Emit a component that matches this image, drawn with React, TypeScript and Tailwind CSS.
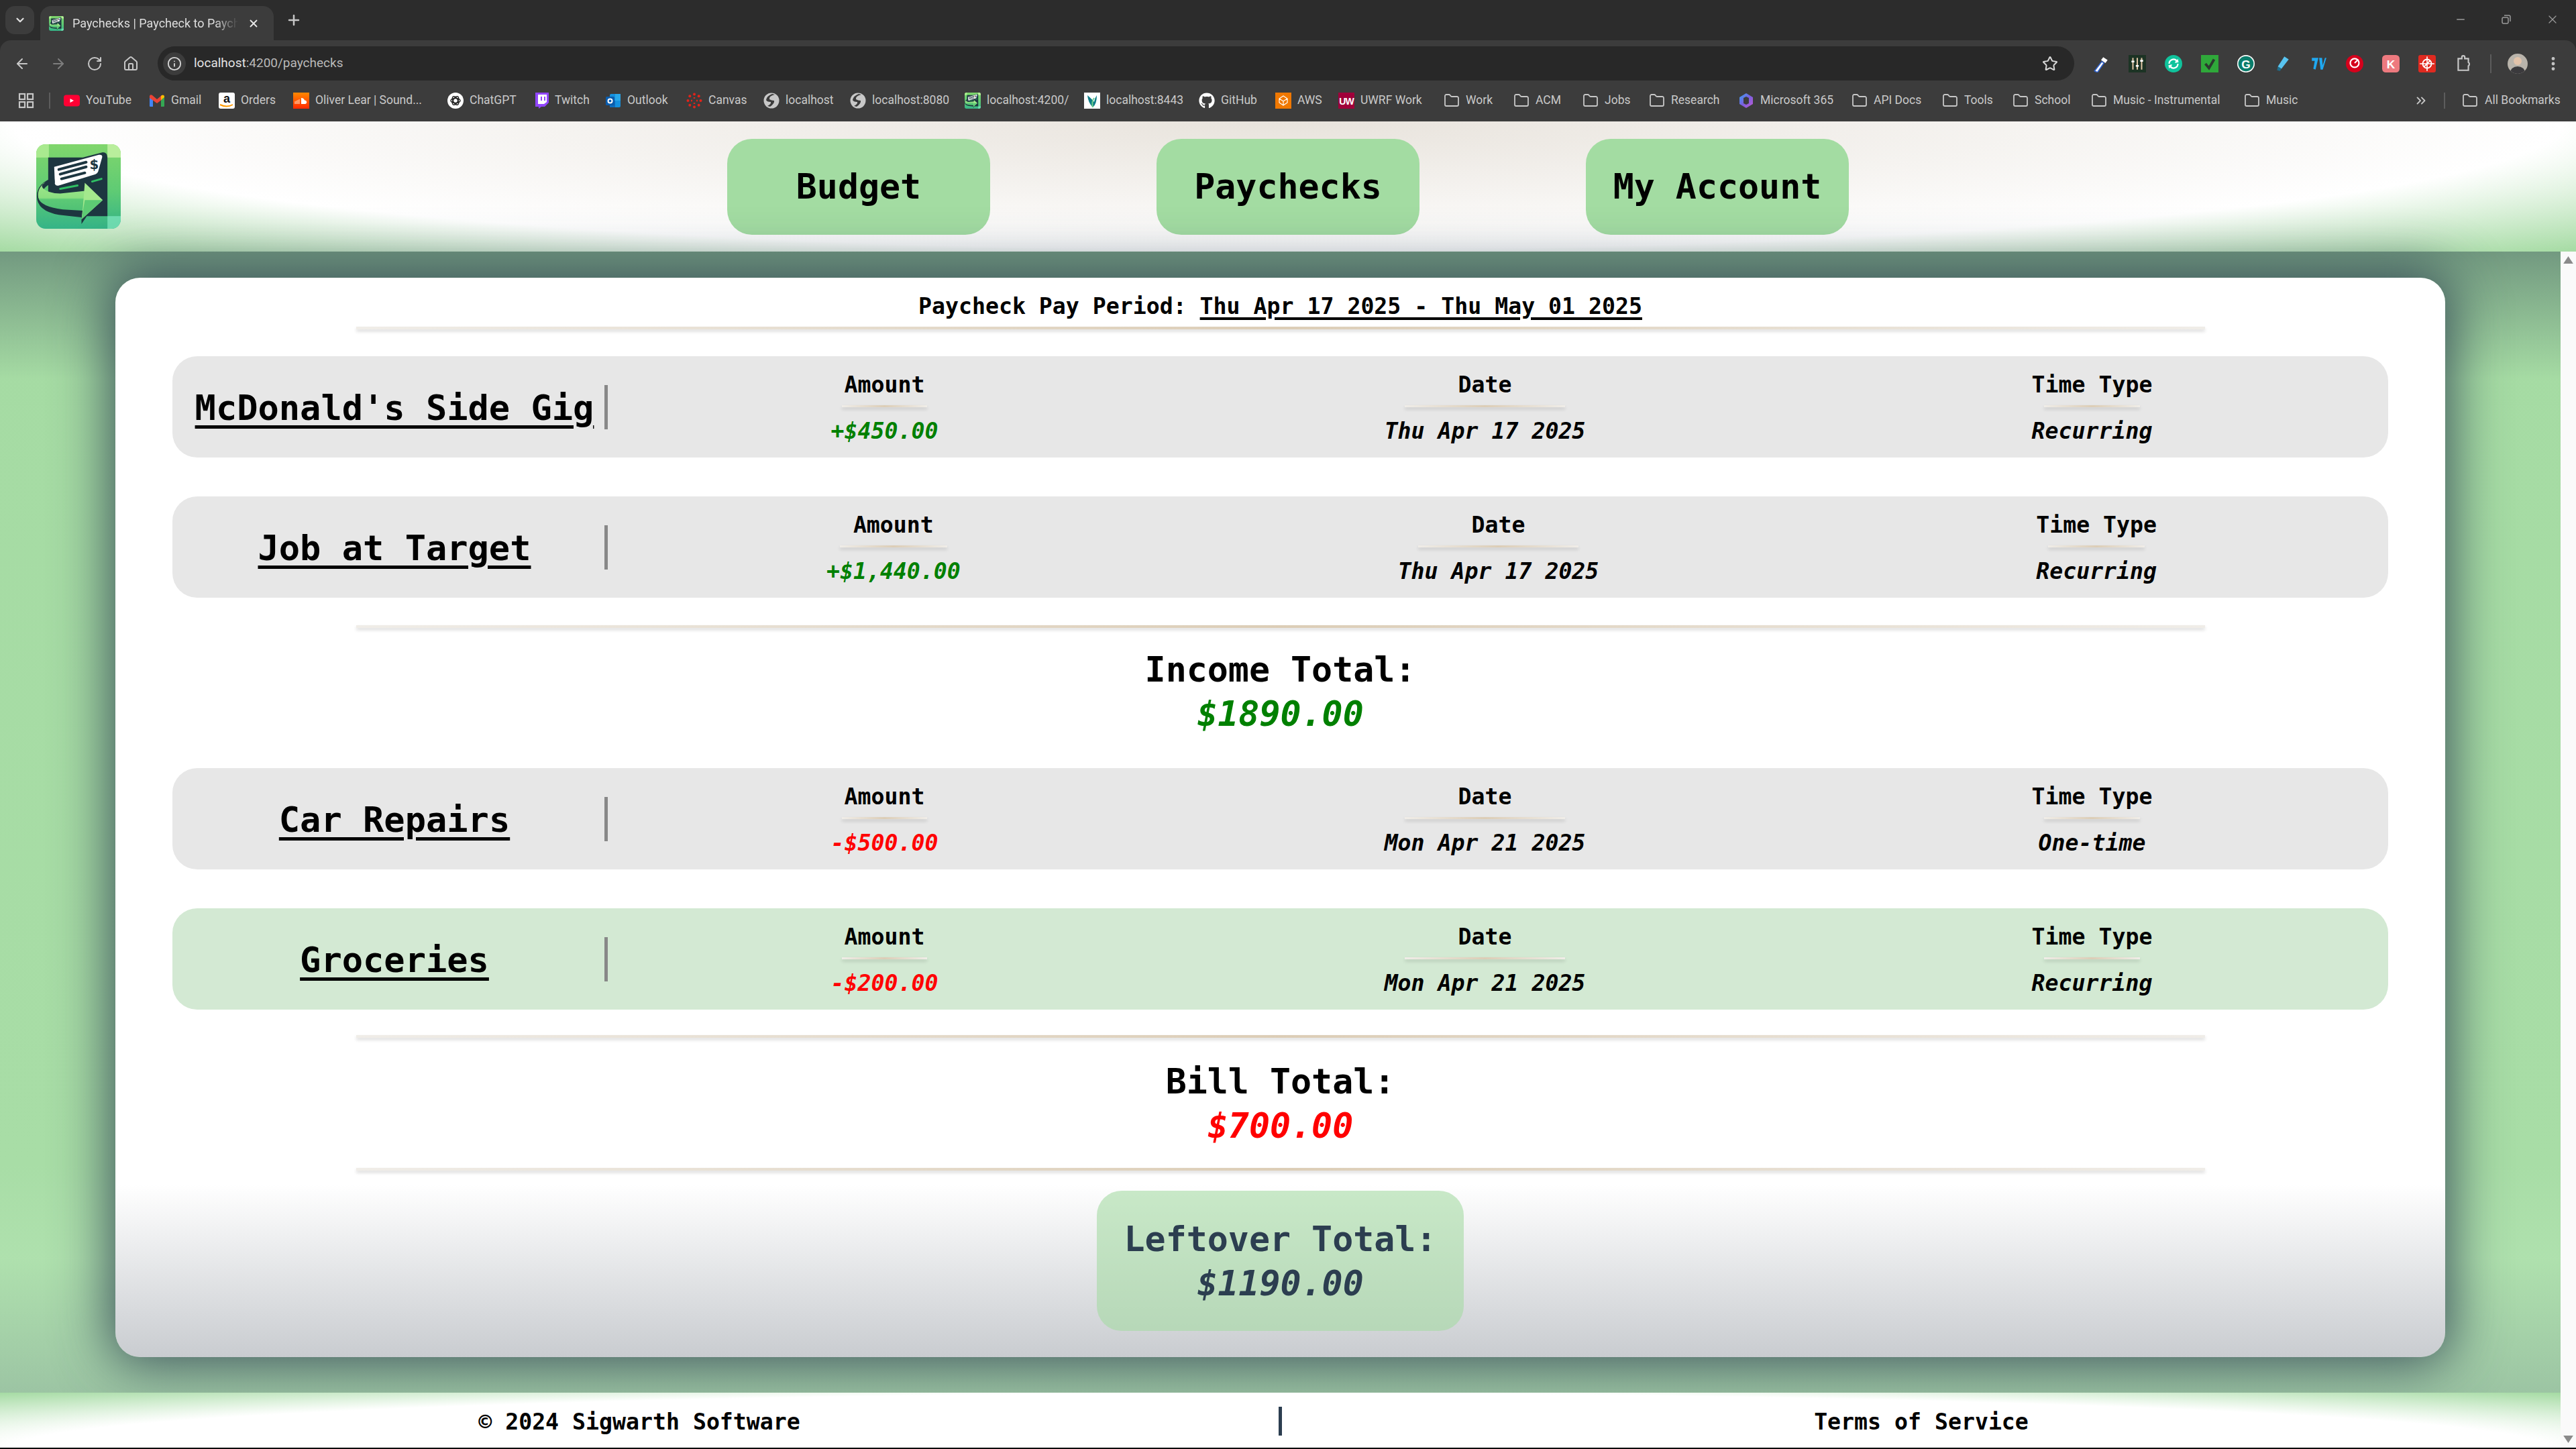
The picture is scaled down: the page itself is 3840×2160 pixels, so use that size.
import { ArrowLeft, ArrowRight, ChevronDown, ChevronsRight, EllipsisVertical, Folder, House, Info, Minus, Plus, RotateCw, Star, X } from "lucide-react";
import { FaGithub } from "react-icons/fa";
import type { ReactNode } from "react";

const mono = "font-['DejaVu_Sans_Mono',monospace]";

function AppLogo({ className }: { className: string }) {
    return (
        <svg viewBox="0 0 127 127" className={className}>
            <defs>
                <linearGradient id="logoBg" x1="0" y1="0" x2="0" y2="1">
                    <stop offset="0" stopColor="#80d66c" />
                    <stop offset="0.55" stopColor="#5fcb74" />
                    <stop offset="1" stopColor="#35b487" />
                </linearGradient>
                <linearGradient id="logoBand" x1="0" y1="0" x2="0" y2="1">
                    <stop offset="0" stopColor="#a2e78c" />
                    <stop offset="0.55" stopColor="#8bdf80" />
                    <stop offset="0.6" stopColor="#5cc976" />
                    <stop offset="1" stopColor="#4fc175" />
                </linearGradient>
                <clipPath id="logoClip">
                    <rect width="127" height="127" rx="14" />
                </clipPath>
            </defs>
            <g clipPath="url(#logoClip)">
                <rect width="127" height="127" fill="url(#logoBg)" />
                <rect width="19" height="20" fill="#a9ea8f" />
                <rect x="107" width="20" height="20" fill="#b9ee9c" />
                <rect x="107" y="108" width="20" height="19" fill="#6edcb0" />
                <path d="M18 20H70L100 12Q107 12 107 20V108H76L68 120V104L40 100 18 80Z" fill="#1d3640" />
                <path d="M27 34 94 16q6-1 5 4L93 41q-1 3-4 4L34 62q-5 1-6-3z" fill="#fff" />
                <path d="M34 38 75 27M36 45 75 34M38 52 73 43" stroke="#1d3640" strokeWidth="4" strokeLinecap="round" />
                <text x="87" y="37" textAnchor="middle" fontFamily="'DejaVu Sans',sans-serif" fontWeight="700" fontSize="20" fill="#1d3640">$</text>
                <path d="M36 67 62 62" stroke="#2fbf63" strokeWidth="3" strokeLinecap="round" />
                <path d="M84 56 98 52" stroke="#2fbf63" strokeWidth="3" strokeLinecap="round" />
                <path d="M27 50Q1 58 1 78 1 100 34 106L70 110V98L40 96Q12 92 10 74 10 62 28 58Z" fill="#1d3640" />
                <path d="M14 57Q6 60 10 66 18 74 36 74L74 70V100L40 98Q6 94 3 80 1 66 14 57Z" fill="url(#logoBand)" />
                <path d="M73 58 100 84 68 113 70 96z" fill="#a4e88d" />
                <path d="M73 84h27L68 113z" fill="#5dcb74" />
            </g>
        </svg>
    );
}

// bookmark favicons, small and hand drawn
function Favicon({ kind }: { kind: string }) {
    const c = "w-[24px] h-[24px] shrink-0";
    switch (kind) {
        case "youtube":
            return (
                <svg viewBox="0 0 24 24" className={c}>
                    <rect y="3.500" width="24" height="17" rx="4" fill="#ff0033" />
                    <path d="M9.500 9l5.500 3-5.500 3z" fill="#fff" />
                </svg>
            );
        case "gmail":
            return (
                <svg viewBox="0 0 24 24" className={c}>
                    <path d="M1 5v15q0 1 1 1h4V10z" fill="#4285f4" />
                    <path d="M23 5v15q0 1-1 1h-4V10z" fill="#34a853" />
                    <path d="M1 5q1-3 4-1l7 6 7-6 1 0v6l-8 6-11-8z" fill="#ea4335" />
                    <path d="M18 5q3-3 5 0v2l-5 4z" fill="#fbbc04" />
                </svg>
            );
        case "amazon":
            return (
                <svg viewBox="0 0 24 24" className={c}>
                    <rect width="24" height="24" rx="3" fill="#fff" />
                    <text x="12" y="15" textAnchor="middle" fontSize="18" fontWeight="700" fontFamily="'Liberation Sans',sans-serif" fill="#111">a</text>
                    <path d="M2 18q10 5 19 0" stroke="#f90" strokeWidth="2" fill="none" />
                </svg>
            );
        case "soundcloud":
            return (
                <svg viewBox="0 0 24 24" className={c}>
                    <defs>
                        <linearGradient id="sc" x1="0" y1="0" x2="0" y2="1">
                            <stop offset="0" stopColor="#ff8800" />
                            <stop offset="1" stopColor="#ff2a00" />
                        </linearGradient>
                    </defs>
                    <rect width="24" height="24" fill="url(#sc)" />
                    <path d="M12 8a5 5 0 0 1 5 3.500 2.800 2.800 0 0 1 1 5.500h-6z" fill="#fff" />
                    <path d="M3 13v4M5 12v5M7 11v6M9 10v7" stroke="#ffc9a8" strokeWidth="1.200" />
                </svg>
            );
        case "chatgpt":
            return (
                <svg viewBox="0 0 24 24" className={c}>
                    <circle cx="12" cy="12" r="12" fill="#fff" />
                    <g fill="none" stroke="#222" strokeWidth="1.500">
                        <ellipse cx="12" cy="12" rx="7" ry="3.500" />
                        <ellipse cx="12" cy="12" rx="7" ry="3.500" transform="rotate(60 12 12)" />
                        <ellipse cx="12" cy="12" rx="7" ry="3.500" transform="rotate(120 12 12)" />
                    </g>
                </svg>
            );
        case "twitch":
            return (
                <svg viewBox="0 0 24 24" className={c}>
                    <path d="M4 0h20v15l-6 6h-5l-4 3v-3H4z" fill="#9146ff" />
                    <path d="M8 3h13v11l-4 3H8z" fill="#fff" />
                    <path d="M12 6h2v6h-2zM17 6h2v6h-2z" fill="#9146ff" />
                </svg>
            );
        case "outlook":
            return (
                <svg viewBox="0 0 24 24" className={c}>
                    <rect x="7" y="2" width="16" height="20" rx="2" fill="#1490df" />
                    <rect x="15" y="2" width="8" height="10" fill="#28a8ea" />
                    <rect x="7" y="12" width="8" height="10" fill="#0f6cbd" />
                    <rect x="1" y="6" width="13" height="13" rx="1.500" fill="#0a5cad" />
                    <circle cx="7.500" cy="12.500" r="3" fill="none" stroke="#fff" strokeWidth="2" />
                </svg>
            );
        case "canvas":
            return (
                <svg viewBox="0 0 24 24" className={c}>
                    <g fill="#e2231a">
                        <circle cx="12" cy="2.500" r="2" />
                        <circle cx="12" cy="21.500" r="2" />
                        <circle cx="2.500" cy="12" r="2" />
                        <circle cx="21.500" cy="12" r="2" />
                        <circle cx="5.300" cy="5.300" r="2" />
                        <circle cx="18.700" cy="5.300" r="2" />
                        <circle cx="5.300" cy="18.700" r="2" />
                        <circle cx="18.700" cy="18.700" r="2" />
                    </g>
                    <g stroke="#e2231a" strokeWidth="2.500">
                        <path d="M12 7v2M12 15v2M7 12h2M15 12h2" />
                    </g>
                </svg>
            );
        case "globe":
            return (
                <svg viewBox="0 0 24 24" className={c}>
                    <circle cx="12" cy="12" r="11.500" fill="#c8c8c8" />
                    <path d="M17 3q-9 2-8 7 3 2 7 2 1 4-6 9l-4-1q6-3 5-6-6 0-7-3 1-6 9-9z" fill="#3c3c3c" />
                </svg>
            );
        case "paycheck":
            return <AppLogo className={c} />;
        case "leaf":
            return (
                <svg viewBox="0 0 24 24" className={c}>
                    <rect width="24" height="24" fill="#fff" />
                    <path d="M5 4q1 11 8 18 6-5 6-18-3 4-4 10-3-4-10-10z" fill="#0f7d88" />
                    <path d="M13 22q-2-9 2-14" stroke="#6fd08c" strokeWidth="2" fill="none" />
                </svg>
            );
        case "github":
            return <FaGithub className={`${c} text-white`} />;
        case "aws":
            return (
                <svg viewBox="0 0 24 24" className={c}>
                    <rect width="24" height="24" fill="#f07800" />
                    <path d="M12 5l6 4v6l-6 4-6-4V9zM6 9l6 4 6-4M12 13v6" fill="none" stroke="#fff" strokeWidth="1.200" />
                </svg>
            );
        case "uw":
            return (
                <svg viewBox="0 0 24 24" className={c}>
                    <rect width="24" height="24" fill="#a0003a" />
                    <text x="12" y="18" textAnchor="middle" fontSize="14" fontWeight="700" fontFamily="'Liberation Sans',sans-serif" fill="#fff" letterSpacing="-1">UW</text>
                </svg>
            );
        case "m365":
            return (
                <svg viewBox="0 0 24 24" className={c}>
                    <defs>
                        <linearGradient id="m365" x1="0" y1="0" x2="1" y2="1">
                            <stop offset="0" stopColor="#38a3f1" />
                            <stop offset="0.5" stopColor="#7b5fe0" />
                            <stop offset="1" stopColor="#c25bd0" />
                        </linearGradient>
                    </defs>
                    <path d="M12 1 22 7v10L12 23 2 17V7z" fill="url(#m365)" />
                    <path d="M8 8l4-2 4 2v8l-4 2-4-2z" fill="#3c3c3c" />
                </svg>
            );
        default:
            return <Folder className="w-[24px] h-[24px] shrink-0 text-[#c7c7c7]" strokeWidth={1.8} />;
    }
}

const bookmarks = [
    { label: "YouTube", icon: "youtube", box: "w-[127px]" },
    { label: "Gmail", icon: "gmail", box: "w-[104px]" },
    { label: "Orders", icon: "amazon", box: "w-[111px]" },
    { label: "Oliver Lear | Sound...", icon: "soundcloud", box: "w-[230px]" },
    { label: "ChatGPT", icon: "chatgpt", box: "w-[127px]" },
    { label: "Twitch", icon: "twitch", box: "w-[108px]" },
    { label: "Outlook", icon: "outlook", box: "w-[121px]" },
    { label: "Canvas", icon: "canvas", box: "w-[115px]" },
    { label: "localhost", icon: "globe", box: "w-[129px]" },
    { label: "localhost:8080", icon: "globe", box: "w-[171px]" },
    { label: "localhost:4200/", icon: "paycheck", box: "w-[178px]" },
    { label: "localhost:8443", icon: "leaf", box: "w-[171px]" },
    { label: "GitHub", icon: "github", box: "w-[114px]" },
    { label: "AWS", icon: "aws", box: "w-[94px]" },
    { label: "UWRF Work", icon: "uw", box: "w-[157px]" },
    { label: "Work", icon: "folder", box: "w-[104px]" },
    { label: "ACM", icon: "folder", box: "w-[103px]" },
    { label: "Jobs", icon: "folder", box: "w-[99px]" },
    { label: "Research", icon: "folder", box: "w-[133px]" },
    { label: "Microsoft 365", icon: "m365", box: "w-[169px]" },
    { label: "API Docs", icon: "folder", box: "w-[135px]" },
    { label: "Tools", icon: "folder", box: "w-[105px]" },
    { label: "School", icon: "folder", box: "w-[117px]" },
    { label: "Music - Instrumental", icon: "folder", box: "w-[228px]" },
    { label: "Music", icon: "folder", box: "w-[90px]" },
];

function ExtIcon({ children }: { children: ReactNode }) {
    return <svg viewBox="0 0 24 24" className="w-[26px] h-[26px] shrink-0">{children}</svg>;
}

function BrowserChrome() {
    return (
        <div className="shrink-0 h-[181px] bg-[#2c2c2c] text-[#d4d4d4] font-['Roboto',sans-serif]">
            {/* tab strip */}
            <div className="h-[60px] flex items-end pl-[8px]">
                <div className="w-[43px] h-[42px] mb-[9px] rounded-[14px] bg-[#3c3c3c] flex items-center justify-center">
                    <ChevronDown className="size-[18px] text-[#e0e0e0]" strokeWidth={3} />
                </div>
                <div className="ml-[9px] w-[348px] h-[51px] rounded-t-[16px] bg-[#3c3c3c] flex items-center pl-[13px] pr-[14px]">
                    <AppLogo className="w-[22px] h-[24px] shrink-0" />
                    <span className="ml-[13px] w-[247px] whitespace-nowrap text-[18px] text-[#dedede] [mask-image:linear-gradient(to_right,black_86%,transparent)]">Paychecks | Paycheck to Payche</span>
                    <X className="ml-[14px] size-[18px] text-[#e6e6e6]" strokeWidth={2.5} />
                </div>
                <Plus className="ml-[18px] mb-[18px] size-[24px] text-[#c7c7c7]" strokeWidth={2.5} />
                <div className="flex-1 h-full flex items-center justify-end gap-[51px] pr-[25px] pb-[2px]">
                    <Minus className="size-[18px] text-[#9a9a9a]" />
                    <svg viewBox="0 0 16 16" className="size-[16px] text-[#9a9a9a]" fill="none" stroke="currentColor" strokeWidth="1.500">
                        <rect x="2" y="5" width="9" height="9" rx="2" />
                        <path d="M5 2h7a2 2 0 0 1 2 2v7" />
                    </svg>
                    <X className="size-[20px] text-[#9a9a9a]" strokeWidth={1.5} />
                </div>
            </div>
            {/* toolbar */}
            <div className="h-[60px] bg-[#3c3c3c] rounded-t-[16px] flex items-start pl-[21px] pt-[9px]">
                <div className="h-[51px] flex items-center gap-[30px] text-[#c7c7c7]">
                    <ArrowLeft className="size-[24px]" strokeWidth={2} />
                    <ArrowRight className="size-[24px] text-[#7d7d7d]" strokeWidth={2} />
                    <RotateCw className="size-[24px]" strokeWidth={2} />
                    <House className="size-[24px]" strokeWidth={2} />
                </div>
                <div className="ml-[28px] h-[51px] w-[2857px] shrink-0 rounded-full bg-[#282828] flex items-center pl-[8px] pr-[24px]">
                    <div className="size-[34px] rounded-full bg-[#3c3c3c] flex items-center justify-center">
                        <Info className="size-[22px] text-[#d8d8d8]" strokeWidth={2} />
                    </div>
                    <span className="ml-[12px] text-[19px] text-[#e3e3e3]">
                        localhost<span className="text-[#b9b9b9]">:4200/paychecks</span>
                    </span>
                    <Star className="ml-auto size-[24px] text-[#d8d8d8]" strokeWidth={2} />
                </div>
                <div className="h-[51px] ml-[27px] flex items-center gap-[28px]">
                    <ExtIcon>
                        <path d="M3 22 13 9l3 2-9 13z" fill="#fff" stroke="#2f5fc4" strokeWidth="1.500" />
                        <path d="M15 3l6 4-3 4-6-4z" fill="#fff" />
                    </ExtIcon>
                    <ExtIcon>
                        <rect width="24" height="24" fill="#1c3324" />
                        <path d="M6 4v16M12 4v16M18 4v16" stroke="#e6c9a8" strokeWidth="1.800" />
                        <path d="M4 9h4M10 15h4M16 8h4" stroke="#fff" strokeWidth="2.500" />
                    </ExtIcon>
                    <ExtIcon>
                        <circle cx="12" cy="12" r="12" fill="#10c39c" />
                        <path d="M7 12a5 5 0 0 1 8-4l-1 3 5-1-1-5-1 2a7 7 0 0 0-12 5zM17 12a5 5 0 0 1-8 4l1-3-5 1 1 5 1-2a7 7 0 0 0 12-5z" fill="#fff" />
                    </ExtIcon>
                    <ExtIcon>
                        <rect width="24" height="24" fill="#2fa83a" />
                        <path d="M6 12l5 6 7-12" fill="none" stroke="#2b3a2e" strokeWidth="3.500" />
                    </ExtIcon>
                    <ExtIcon>
                        <circle cx="12" cy="12" r="12" fill="#fff" />
                        <circle cx="12" cy="12" r="10.500" fill="#0a7d6c" />
                        <text x="12" y="18" textAnchor="middle" fontSize="16" fontWeight="700" fontFamily="'Liberation Sans',sans-serif" fill="#fff">G</text>
                    </ExtIcon>
                    <ExtIcon>
                        <path d="M15 2 21 6 11 19l-5-3z" fill="#58c4f0" />
                        <path d="M6 16l5 3-2 3-4-1z" fill="#1f6d8c" />
                    </ExtIcon>
                    <ExtIcon>
                        <path d="M3 4h9l-4 16-3-1 2-11H3z" fill="#1fa8f0" />
                        <path d="M13 4h4l1 10 3-10h2l-5 16h-3z" fill="#1fa8f0" />
                    </ExtIcon>
                    <ExtIcon>
                        <circle cx="12" cy="12" r="12" fill="#d5001c" />
                        <circle cx="12" cy="11" r="6" fill="none" stroke="#fff" strokeWidth="2" />
                        <path d="M12 11l5-5" stroke="#fff" strokeWidth="2" />
                    </ExtIcon>
                    <ExtIcon>
                        <rect width="24" height="24" rx="5" fill="#ee7a7f" />
                        <text x="12" y="18" textAnchor="middle" fontSize="16" fontWeight="700" fontFamily="'Liberation Sans',sans-serif" fill="#fff">K</text>
                    </ExtIcon>
                    <ExtIcon>
                        <rect width="24" height="24" rx="3" fill="#e02a20" />
                        <circle cx="12" cy="12" r="6" fill="none" stroke="#fff" strokeWidth="1.800" />
                        <path d="M12 2v20M2 12h20M8 16l8-8" stroke="#fff" strokeWidth="1.500" />
                    </ExtIcon>
                    <ExtIcon>
                        <path d="M5 5h5V3a2 2 0 0 1 4 0v2h5v5a3 3 0 0 1 0 5v6H5z" fill="none" stroke="#c7c7c7" strokeWidth="2" />
                    </ExtIcon>
                </div>
                <div className="h-[51px] ml-[27px] flex items-center">
                    <div className="w-[2px] h-[28px] bg-[#5c5c5c]" />
                    <svg viewBox="0 0 30 30" className="ml-[24px] size-[30px] rounded-full">
                        <rect width="30" height="30" fill="#b9b4ab" />
                        <circle cx="15" cy="11" r="6" fill="#e2c3aa" />
                        <path d="M3 30q2-11 12-11t12 11z" fill="#3b3a3d" />
                    </svg>
                    <EllipsisVertical className="ml-[25px] size-[26px] text-[#c7c7c7]" strokeWidth={2.5} />
                </div>
            </div>
            {/* bookmarks bar */}
            <div className="h-[61px] bg-[#3c3c3c] flex items-center text-[17.5px] text-[#c9c9c9] pl-[27px] pb-[2px]">
                <svg viewBox="0 0 24 24" className="size-[24px] shrink-0" fill="none" stroke="#c7c7c7" strokeWidth="2.200">
                    <rect x="2" y="2" width="8" height="8" />
                    <rect x="14" y="2" width="8" height="8" />
                    <rect x="2" y="14" width="8" height="8" />
                    <rect x="14" y="14" width="8" height="8" />
                </svg>
                <div className="ml-[22px] w-[2px] h-[24px] bg-[#5c5c5c] shrink-0" />
                <div className="ml-[20px] flex items-center">
                    {bookmarks.map((b) => (
                        <div key={b.label} className={`${b.box} shrink-0 flex items-center gap-[9px] whitespace-nowrap`}>
                            <Favicon kind={b.icon} />
                            <span>{b.label}</span>
                        </div>
                    ))}
                </div>
                <ChevronsRight className="ml-[163px] size-[22px] text-[#c7c7c7] shrink-0" />
                <div className="ml-[23px] w-[2px] h-[24px] bg-[#5c5c5c] shrink-0" />
                <div className="ml-[25px] flex items-center gap-[10px] whitespace-nowrap">
                    <Favicon kind="folder" />
                    <span>All Bookmarks</span>
                </div>
            </div>
        </div>
    );
}

function Divider({ className }: { className: string }) {
    return <div className={`${className} bg-[linear-gradient(to_right,#f0ede8,#dccdb6,#f0ede8)] shadow-[0_3px_5px_rgba(0,0,0,0.16)]`} />;
}

interface Entry {
    name: string;
    amount: string;
    positive?: boolean;
    date: string;
    kind: string;
    hover?: boolean;
}

function Cell({ head, value, valueClass }: { head: string; value: string; valueClass: string }) {
    return (
        <div className="flex flex-col items-center">
            <div className="h-[40px] leading-[44px] font-bold text-black">{head}</div>
            <Divider className="w-4/5 h-[3px] mt-[12px]" />
            <div className={`h-[40px] leading-[44px] mt-[14px] font-bold italic whitespace-nowrap ${valueClass}`}>{value}</div>
        </div>
    );
}

function EntryRow({ entry, className }: { entry: Entry; className?: string }) {
    return (
        <div className={`mx-[85px] h-[151px] rounded-[37px] flex items-center pl-[18px] pr-[19px] text-[33.2px] ${entry.hover ? "bg-[#d3e9d3]" : "bg-[#e7e7e7]"} ${className ?? ""}`}>
            <div className="w-[626px] shrink-0 pt-[2px] text-center text-[52px] font-bold text-black underline decoration-[5px] underline-offset-[8px]">{entry.name}</div>
            <div className="w-[5px] h-[66px] shrink-0 bg-[#888888]" />
            <div className="flex-1 flex justify-around">
                <Cell head="Amount" value={entry.amount} valueClass={entry.positive ? "text-[#008000]" : "text-[#ff0000]"} />
                <Cell head="Date" value={entry.date} valueClass="text-black" />
                <Cell head="Time Type" value={entry.kind} valueClass="text-black" />
            </div>
        </div>
    );
}

const income: Entry[] = [
    { name: "McDonald's Side Gig", amount: "+$450.00", positive: true, date: "Thu Apr 17 2025", kind: "Recurring" },
    { name: "Job at Target", amount: "+$1,440.00", positive: true, date: "Thu Apr 17 2025", kind: "Recurring" },
];

const bills: Entry[] = [
    { name: "Car Repairs", amount: "-$500.00", date: "Mon Apr 21 2025", kind: "One-time" },
    { name: "Groceries", amount: "-$200.00", date: "Mon Apr 21 2025", kind: "Recurring", hover: true },
];

export default function App() {
    return (
        <div className={`w-[3840px] h-[2160px] overflow-hidden flex flex-col bg-black ${mono}`}>
            <BrowserChrome />

            {/* site header */}
            <header className="shrink-0 h-[194px] grid grid-cols-[1fr_auto_1fr] items-center bg-[radial-gradient(ellipse_at_top,#e8e3dc_0%,#ffffff_70%,#a5dba3_100%)]">
                <div className="pl-[54px]">
                    <AppLogo className="w-[126px] h-[128px]" />
                </div>
                <nav className="flex gap-[248px] mt-[1px]">
                    {["Budget", "Paychecks", "My Account"].map((item) => (
                        <div key={item} className="w-[392px] h-[143px] rounded-[37px] bg-[#a3dca2] flex items-center justify-center text-[51.6px] font-bold text-black">
                            {item}
                        </div>
                    ))}
                </nav>
                <div />
            </header>

            <div className="h-[1783px] shrink-0 flex">
                <div className="w-[3817px] shrink-0 flex flex-col">
                    <main className="h-[1701px] shrink-0 pt-[39px] px-[172px] bg-[linear-gradient(to_bottom,rgba(44,62,80,0.42),rgba(44,62,80,0)_190px,rgba(44,62,80,0)_1500px,rgba(44,62,80,0.2)),linear-gradient(to_bottom,#a5dba3,#a8dda6_80%,#b8e6b8)]">
                        <div className="h-[1609px] rounded-[37px] shadow-[0_0_80px_10px_rgba(44,62,80,0.85)] bg-[linear-gradient(to_bottom,#ffffff_84%,#c9ccd0)] pt-[21px] flex flex-col">
                            <div className="h-[40px] leading-[43px] text-center text-[33.2px] font-bold text-black whitespace-pre">
                                Paycheck Pay Period: <span className="underline decoration-[4px] underline-offset-[5px]">Thu Apr 17 2025 - Thu May 01 2025</span>
                            </div>
                            <Divider className="mx-auto w-[2756px] h-[4px] mt-[12px]" />

                            <EntryRow entry={income[0]} className="mt-[40px]" />
                            <EntryRow entry={income[1]} className="mt-[58px]" />
                            <Divider className="mx-auto w-[2756px] h-[4px] mt-[41px]" />

                            <div className="mt-[29px] text-center text-[51.6px] leading-[66px] font-bold">
                                <div className="text-black">Income Total:</div>
                                <div className="italic text-[#008000]">$1890.00</div>
                            </div>

                            <EntryRow entry={bills[0]} className="mt-[48px]" />
                            <EntryRow entry={bills[1]} className="mt-[58px]" />
                            <Divider className="mx-auto w-[2756px] h-[4px] mt-[38px]" />

                            <div className="mt-[32px] text-center text-[51.6px] leading-[66px] font-bold">
                                <div className="text-black">Bill Total:</div>
                                <div className="italic text-[#ff0000]">$700.00</div>
                            </div>
                            <Divider className="mx-auto w-[2756px] h-[4px] mt-[30px]" />

                            <div className="mx-auto mt-[30px] w-[547px] h-[209px] rounded-[37px] bg-[#a5dba3]/60 flex flex-col items-center justify-center text-[51.6px] leading-[66px] font-bold text-[#2c3e50]">
                                <div>Leftover Total:</div>
                                <div className="italic">$1190.00</div>
                            </div>
                        </div>
                    </main>

                    <footer className="h-[82px] shrink-0 flex items-center text-[33.2px] font-bold text-black bg-[radial-gradient(ellipse_at_bottom,#ffffff_70%,#a5dba3_100%)]">
                        <div className="flex-1 pt-[6px] text-center">© 2024 Sigwarth Software</div>
                        <div className="w-[5px] h-[43px] mt-[2px] bg-[#2c3e50]" />
                        <div className="flex-1 pt-[6px] text-center">Terms of Service</div>
                    </footer>
                </div>

                {/* page scrollbar */}
                <div className="w-[23px] shrink-0 bg-[#fafafa] flex flex-col items-center justify-between py-[7px]">
                    <svg viewBox="0 0 16 12" className="w-[15px] h-[11px]"><path d="M8 0l8 12H0z" fill="#8a8a8a" /></svg>
                    <svg viewBox="0 0 16 12" className="w-[15px] h-[11px]"><path d="M0 0h16L8 12z" fill="#8a8a8a" /></svg>
                </div>
            </div>
        </div>
    );
}
